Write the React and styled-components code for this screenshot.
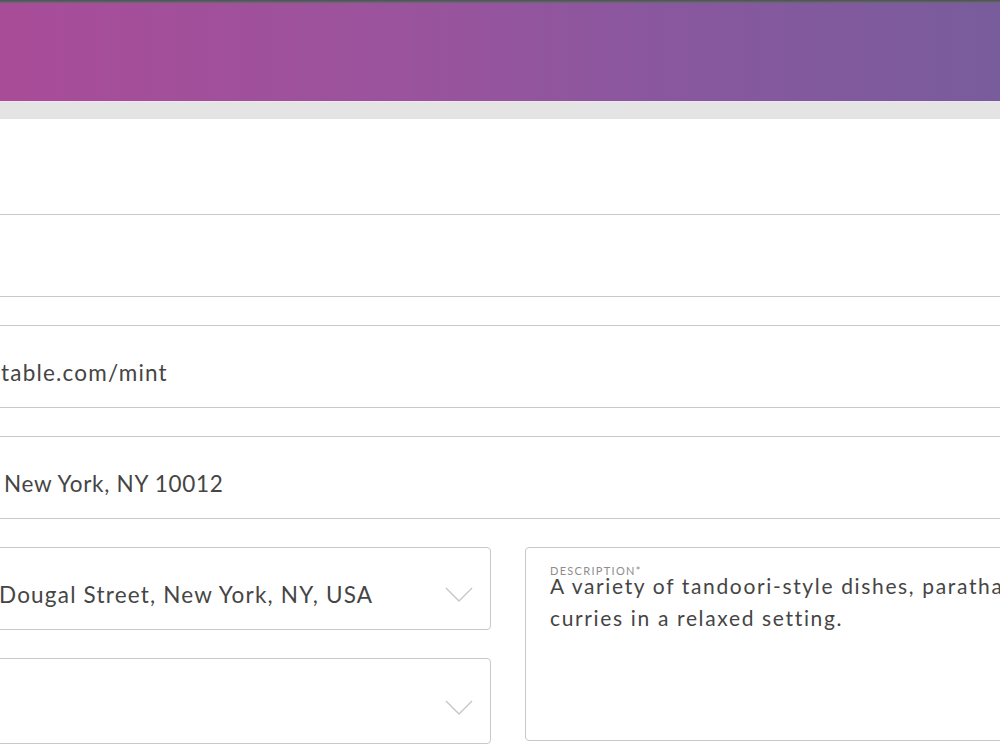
import React from "react";
import styled, { createGlobalStyle } from "styled-components";

const Global = createGlobalStyle`
  html, body { margin: 0; padding: 0; background: #ffffff; }
  body { overflow: hidden; font-family: Lato, "Noto Sans", Arial, sans-serif; }
  #root { width: 1000px; height: 750px; overflow: hidden; }
`;

const Page = styled.div`
  width: 1000px;
  height: 750px;
  overflow: hidden;
  background: #fff;
`;

const TopEdge = styled.div`
  height: 3px;
  background: linear-gradient(to bottom, #4d5156, #6b6d72);
`;

const Banner = styled.header`
  height: 98px;
  background: linear-gradient(to right, #a94c98 0%, #9b539d 40%, #8a579e 65%, #795c9c 100%);
`;

const Band = styled.div`
  height: 17px;
  background: #e4e4e4;
  border-top: 1px solid #efe4ef;
`;

const Form = styled.form`
  margin: 95px 0 0 -24px;
  width: 1064px;
  display: flex;
  flex-direction: column;
  gap: 28px;
`;

const TextField = styled.input`
  box-sizing: border-box;
  display: block;
  width: 100%;
  height: 83px;
  margin: 0;
  padding: 12px 24px 0 24px;
  border: 1px solid #c9c9c9;
  border-radius: 4px;
  background: #fff;
  font-family: Lato, "Noto Sans", Arial, sans-serif;
  font-size: 22.5px;
  letter-spacing: ${(p) => p.$spacing ?? 1.2}px;
  color: #454545;
  text-indent: ${(p) => p.$indent || 0}px;
  outline: none;
`;

const SplitRow = styled.div`
  display: grid;
  grid-template-columns: 515px 515px;
  column-gap: 34px;
  align-items: start;
`;

const Column = styled.div`
  display: flex;
  flex-direction: column;
  gap: 28px;
`;

const SelectBox = styled.div`
  box-sizing: border-box;
  height: ${(p) => p.$h || 83}px;
  display: flex;
  align-items: center;
  justify-content: space-between;
  padding: 12px 17px 0 24px;
  border: 1px solid #c9c9c9;
  border-radius: 4px;
  background: #fff;
`;

const SelectValue = styled.span`
  font-size: 22.5px;
  letter-spacing: 1.2px;
  color: #454545;
  white-space: nowrap;
  text-indent: ${(p) => p.$indent || 0}px;
  display: block;
`;

const Chevron = styled.svg`
  flex: none;
  width: 28px;
  height: 15px;
`;

const AreaBox = styled.div`
  box-sizing: border-box;
  height: 194px;
  padding: 17px 20px 0 24px;
  border: 1px solid #c9c9c9;
  border-radius: 4px;
  background: #fff;
  display: flex;
  flex-direction: column;
`;

const AreaLabel = styled.label`
  display: block;
  font-size: 11px;
  line-height: 11px;
  letter-spacing: 1.3px;
  color: #8d8d8d;
  text-transform: uppercase;
`;

const AreaText = styled.textarea`
  display: block;
  margin: -6px 0 0 0;
  padding: 0;
  border: none;
  outline: none;
  resize: none;
  overflow: hidden;
  width: 600px;
  height: 140px;
  font-family: Lato, "Noto Sans", Arial, sans-serif;
  font-size: 21px;
  line-height: 32px;
  letter-spacing: 1.65px;
  color: #454545;
  background: transparent;
`;

const ChevronIcon = () => (
  <Chevron viewBox="0 0 28 15" fill="none">
    <path d="M1 1 L14 14 L27 1" stroke="#c6c6c6" strokeWidth="1.4" />
  </Chevron>
);

export default function App() {
  return (
    <Page>
      <Global />
      <TopEdge />
      <Banner />
      <Band />
      <Form>
        <TextField readOnly value="" />
        <TextField readOnly value="table.com/mint" />
        <TextField readOnly value="New York, NY 10012" $indent={3} $spacing={0.7} />
        <SplitRow>
          <Column>
            <SelectBox>
              <SelectValue $indent={-2}>Dougal Street, New York, NY, USA</SelectValue>
              <ChevronIcon />
            </SelectBox>
            <SelectBox $h={86}>
              <SelectValue />
              <ChevronIcon />
            </SelectBox>
          </Column>
          <AreaBox>
            <AreaLabel>Description*</AreaLabel>
            <AreaText
              readOnly
              value={"A variety of tandoori-style dishes, paratha and\ncurries in a relaxed setting."}
            />
          </AreaBox>
        </SplitRow>
      </Form>
    </Page>
  );
}
